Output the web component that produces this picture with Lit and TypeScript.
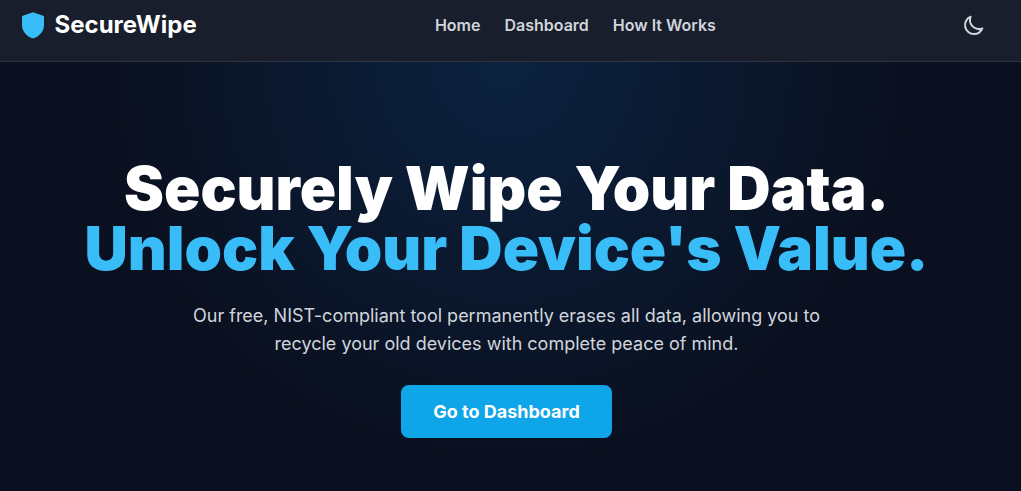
import { LitElement, html, css } from "lit";
import { customElement } from "lit/decorators.js";

@customElement("app-root")
export class AppRoot extends LitElement {
  static styles = css`
    :host { display: flex; flex-direction: column; height: 491px; overflow: hidden; background: #0a101f; color: #fff; font-family: Inter, sans-serif; }
    * { box-sizing: border-box; }
    header { display: flex; justify-content: space-between; align-items: center; height: 62px; padding: 0 27px 12px 20px; background: #181e2b; border-bottom: 1px solid #30353f; flex: none; }
    .brand { display: flex; align-items: center; gap: 8.5px; font-size: 24px; line-height: 32px; font-weight: 700; }
    .shield { width: 26px; height: 28px; }
    nav { display: flex; gap: 24px; font-size: 16px; line-height: 24px; font-weight: 600; color: #d1d5db; }
    .theme { display: flex; padding: 8px; border: 0; background: none; color: #d1d5db; }
    main { flex: 1; display: flex; flex-direction: column; align-items: center; padding: 96px 8px 0 0; text-align: center;
      background: radial-gradient(circle at 506px 0, rgba(14, 75, 140, .3), transparent 400px); }
    h1 { margin: 0; font-size: 60px; line-height: 60px; font-weight: 900; }
    .accent { display: block; color: #38bdf8; }
    p { margin: 24px 0 0; font-size: 18px; line-height: 28px; color: #d1d5db; width: 672px; }
    .cta { margin-top: 27px; width: 211px; height: 53px; border: 0; border-radius: 8px; background: #0ea5e9; color: #fff; font: 700 18px/28px Inter, sans-serif; }
  `;

  render() {
    return html`
      <header>
        <div class="brand">
          <svg class="shield" viewBox="0 0 26 28"><path fill="#38bdf8" d="M13 1.2 23.2 4.8Q24 5.1 24 6v8c0 6-4.5 11-9.3 12.9Q13 27.7 11.3 26.900C6.500 25 2 20 2 14V6Q2 5.100 2.800 4.800z" /></svg>
          <span>SecureWipe</span>
        </div>
        <nav><span>Home</span><span>Dashboard</span><span>How It Works</span></nav>
        <button class="theme" aria-label="Toggle theme">
          <svg width="24" height="24" viewBox="0 0 24 24" fill="none" stroke="currentColor" stroke-width="2" stroke-linecap="round" stroke-linejoin="round"><path d="M20.354 15.354A9 9 0 018.646 3.646 9.003 9.003 0 0012 21a9.003 9.003 0 008.354-5.646z" /></svg>
        </button>
      </header>
      <main>
        <h1>Securely Wipe Your Data.<span class="accent">Unlock Your Device's Value.</span></h1>
        <p>Our free, NIST-compliant tool permanently erases all data, allowing you to recycle your old devices with complete peace of mind.</p>
        <button class="cta">Go to Dashboard</button>
      </main>
    `;
  }
}
